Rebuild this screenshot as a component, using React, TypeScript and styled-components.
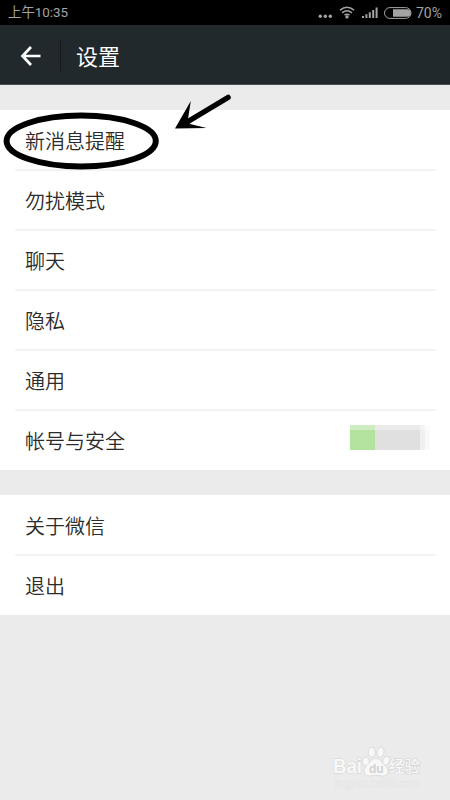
import React from 'react';
import styled, { createGlobalStyle } from 'styled-components';

const GlobalStyle = createGlobalStyle`
  * { box-sizing: border-box; }
  body { margin: 0; background: #ebebeb; }
`;

const Screen = styled.main`
  position: relative;
  display: flex;
  flex-direction: column;
  width: 450px;
  height: 800px;
  overflow: hidden;
  background: #ebebeb;
  color: #2b2b2b;
  font-family: Roboto, 'Noto Sans CJK SC', sans-serif;
`;

const StatusBar = styled.div`
  display: flex;
  flex: none;
  align-items: center;
  justify-content: space-between;
  height: 25px;
  padding: 1px 8px 0;
  background: #000;
  color: #a3a3a3;
  font-size: 14px;
  line-height: 24px;
`;

const StatusTime = styled.span`
  font-size: 13.4px;
`;

const StatusIcons = styled.div`
  display: flex;
  align-items: center;
  gap: 4px;
`;

const StatusGlyphs = styled.svg`
  display: block;
`;

const Header = styled.header`
  display: flex;
  flex: none;
  align-items: center;
  height: 60px;
  padding-left: 20px;
  background: #22292c;
  border-bottom: 1px solid #4a4e51;
  color: #fff;
`;

const BackIcon = styled.svg`
  display: block;
  margin-top: 2px;
`;

const Divider = styled.span`
  width: 1px;
  height: 31px;
  margin: 1px 15px 0 19px;
  background: #14191b;
`;

const Title = styled.h1`
  margin: 6px 0 0;
  font-size: 22px;
  font-weight: 400;
  line-height: 30px;
`;

const Group = styled.section`
  flex: none;
  margin-top: 25px;
  background: #fff;
`;

const Row = styled.div`
  display: flex;
  align-items: center;
  justify-content: space-between;
  height: 60px;
  margin: 0 14px 0 15px;
  padding: 0 6px 0 10px;
  font-size: 20px;
  font-weight: 350;
  line-height: 28px;

  & + & {
    box-shadow: inset 0 1px #f3f3f3, 0 -1px #f3f3f3;
  }
`;

const RowLabel = styled.span`
  padding-top: 3px;
`;

const Masked = styled.span`
  display: flex;
  height: 25px;
  width: 80px;
  margin-top: -5px;
  background: linear-gradient(90deg, #b2e29d 0 25px, #e0e0e1 25px 70px, #f0f0f0 70px 75px, #f9f9f9 75px);
  mask-image: linear-gradient(rgba(0, 0, 0, 0.65) 0 5px, #000 5px);
`;

const Annotation = styled.svg`
  position: absolute;
  top: 85px;
  left: 0;
  pointer-events: none;
`;

const Watermark = styled.svg`
  position: absolute;
  left: 328px;
  top: 740px;
`;

const groups = [
  ['新消息提醒', '勿扰模式', '聊天', '隐私', '通用', '帐号与安全'],
  ['关于微信', '退出'],
];

export default function App() {
  return (
    <>
      <GlobalStyle />
      <Screen>
        <StatusBar>
          <StatusTime>上午10:35</StatusTime>
          <StatusIcons>
            <StatusGlyphs width="94" height="20" viewBox="0 0 94 20" fill="none" stroke="#a3a3a3">
              <g fill="#a3a3a3" stroke="none">
                <circle cx="2.3" cy="13.2" r="1.7" />
                <circle cx="7.3" cy="13.2" r="1.7" />
                <circle cx="12.3" cy="13.2" r="1.7" />
                <circle cx="29" cy="13.9" r="1.7" />
                <path d="M44 13h2v2h-2zM47.4 11.300h2V15h-2zM50.8 9.300h2V15h-2zM54.2 7h2v8h-2zM57.6 4.400h2V15h-2z" />
                <path d="M75 6.2h14a3.8 3.8 0 0 1 0 7.6H75z" />
              </g>
              <path d="M22 7.2Q29 1.5 36 7.2M24.2 9.8Q29 5.9 33.8 9.8M26.500 12.200Q29 10.200 31.500 12.200" strokeWidth="1.5" />
              <rect x="66.5" y="4.6" width="26.5" height="10.8" rx="5.4" />
            </StatusGlyphs>
            <span>70%</span>
          </StatusIcons>
        </StatusBar>
        <Header>
          <BackIcon width="21" height="20" viewBox="0 0 21 20" fill="none" stroke="#fff" strokeWidth="2.7">
            <path d="M11 1 2.5 10l8.5 9M2.5 10H20.5" />
          </BackIcon>
          <Divider />
          <Title>设置</Title>
        </Header>
        {groups.map((labels) => (
          <Group key={labels[0]}>
            {labels.map((label) => (
              <Row key={label}>
                <RowLabel>{label}</RowLabel>
                {label === '帐号与安全' && <Masked />}
              </Row>
            ))}
          </Group>
        ))}
        <Annotation width="240" height="90" viewBox="0 0 240 90">
          <ellipse cx="81.2" cy="56" rx="74.6" ry="25.5" fill="none" stroke="#000" strokeWidth="6" />
          <path d="M228 12.5 188 36.5" stroke="#000" strokeWidth="5.5" strokeLinecap="round" />
          <path d="M175 43.500 190.800 16 188 34 190 39 206.500 43Z" />
        </Annotation>
        <Watermark width="100" height="55" viewBox="0 0 100 55" fill="#f8f8f8" stroke="#d2d2d2" strokeWidth="1">
          <g paintOrder="stroke" fontFamily="Liberation Sans, sans-serif" fontWeight="700">
            <text x="5" y="33" fontSize="19.5" textLength="29" lengthAdjust="spacingAndGlyphs">Bai</text>
            <text x="61" y="32" fontSize="15.5" fontFamily="Noto Sans CJK SC, sans-serif" fontWeight="500" textLength="31" lengthAdjust="spacingAndGlyphs">经验</text>
          </g>
          <g strokeWidth="0.7">
            <ellipse cx="38" cy="21.5" rx="3.4" ry="4.3" transform="rotate(-12 38 21.5)" />
            <ellipse cx="43.7" cy="12.2" rx="3.5" ry="5" />
            <ellipse cx="52.5" cy="12.2" rx="3.5" ry="5" transform="rotate(12 52.5 12.2)" />
            <ellipse cx="58.2" cy="20.8" rx="3.3" ry="4.5" transform="rotate(18 58.2 20.8)" />
            <path d="M48 18.5C52 18.500 53.500 22 57 25.500C62 30 60.500 36.500 54 36C49 35 47 35 42 36C35.500 36.500 34.500 30 38.500 25.500C42 22.500 43.500 18.500 48 18.500Z" />
          </g>
          <text x="41" y="33" fontSize="12" fontFamily="Liberation Sans, sans-serif" fontWeight="700" fill="#d2d2d2" stroke="none">du</text>
          <text x="6" y="46.5" fontSize="10" fontFamily="Liberation Sans, sans-serif" fill="#f3f3f3" stroke="#e2e2e2" strokeWidth="0.4" textLength="86" lengthAdjust="spacingAndGlyphs">jingyan.baidu.com</text>
        </Watermark>
      </Screen>
    </>
  );
}
